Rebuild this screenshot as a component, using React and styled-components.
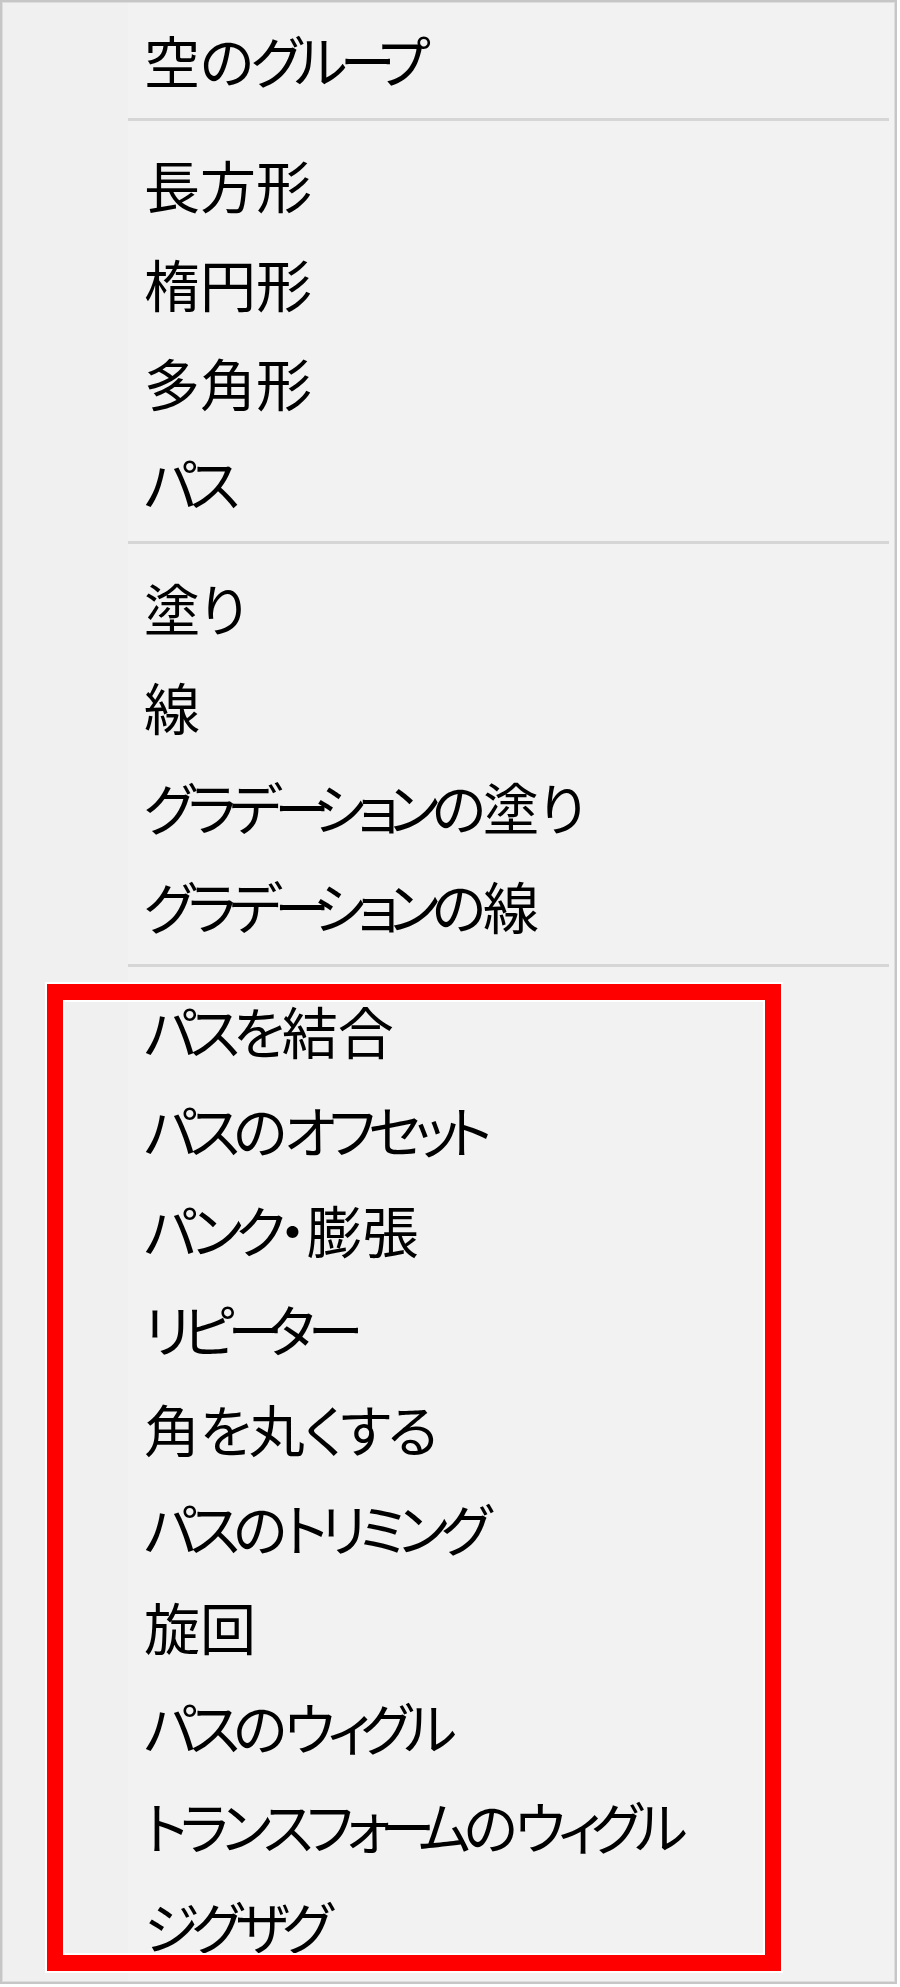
import React from 'react';
import styled, { createGlobalStyle } from 'styled-components';

const GlobalStyle = createGlobalStyle`
  html, body {
    margin: 0;
    padding: 0;
    background: #ffffff;
  }
`;

const sections = [
  ['空のグループ'],
  ['長方形', '楕円形', '多角形', 'パス'],
  ['塗り', '線', 'グラデーションの塗り', 'グラデーションの線'],
];

const effects = [
  'パスを結合',
  'パスのオフセット',
  'パンク・膨張',
  'リピーター',
  '角を丸くする',
  'パスのトリミング',
  '旋回',
  'パスのウィグル',
  'トランスフォームのウィグル',
  'ジグザグ',
];

const kindOf = (ch) => {
  if (ch === 'ー') return 'long';
  if (ch === '・') return 'kanji';
  if (/[ァィゥェォャュョッ]/.test(ch)) return 'small';
  if (/[\u30a0-\u30ff]/.test(ch)) return 'kata';
  if (/[\u3040-\u309f]/.test(ch)) return 'hira';
  return 'kanji';
};

const Label = ({ text }) => {
  const runs = [];
  for (const ch of text) {
    const kind = kindOf(ch);
    const last = runs[runs.length - 1];
    if (last && last.kind === kind) last.text += ch;
    else runs.push({ kind, text: ch });
  }
  return runs.map((r, i) => (
    <Run key={i} $kind={r.kind}>
      {r.text}
    </Run>
  ));
};

const App = () => {
  return (
    <>
      <GlobalStyle />
      <Menu>
        {sections.map((items, i) => (
          <React.Fragment key={i}>
            {items.map((label) => (
              <Item key={label}>
                <Label text={label} />
              </Item>
            ))}
            <Separator />
          </React.Fragment>
        ))}
        <Group>
          {effects.map((label) => (
            <Item key={label}>
              <Label text={label} />
            </Item>
          ))}
          <Highlight />
        </Group>
      </Menu>
    </>
  );
};

export default App;

const Menu = styled.div`
  box-sizing: border-box;
  width: 897px;
  height: 1984px;
  padding: 8px 0 4px;
  border: 2px solid #c6c6c6;
  box-shadow: inset 0 0 0 1px #dedede;
  background: linear-gradient(to right, #f0f0f0 0, #f0f0f0 126px, #f2f2f2 126px);
  display: flex;
  flex-direction: column;
  font-family: 'Noto Sans CJK JP', 'Noto Sans', sans-serif;
  font-feature-settings: 'palt';
  color: #000;
`;

const Item = styled.div`
  height: 99.4px;
  padding-left: 142px;
  padding-bottom: 2px;
  box-sizing: border-box;
  display: flex;
  align-items: center;
  font-size: 56px;
  line-height: 1;
  white-space: nowrap;
`;

const spacing = {
  kanji: '0px',
  hira: '-3px',
  kata: '-7px',
  small: '-10px',
  long: '-17px',
};

const Run = styled.span`
  letter-spacing: ${(p) => spacing[p.$kind]};
`;

const Separator = styled.div`
  height: 3px;
  margin: 8.5px 6px 14.1px 126px;
  background: #d6d6d6;
`;

const Group = styled.div`
  position: relative;
  display: flex;
  flex-direction: column;
`;

const Highlight = styled.div`
  position: absolute;
  top: 3px;
  left: 45px;
  width: 734px;
  height: 987px;
  box-sizing: border-box;
  border: 16px solid #ff0000;
  box-shadow: 0 0 0 2px #ffffff, inset 0 0 0 2px #ffffff;
  pointer-events: none;
`;
